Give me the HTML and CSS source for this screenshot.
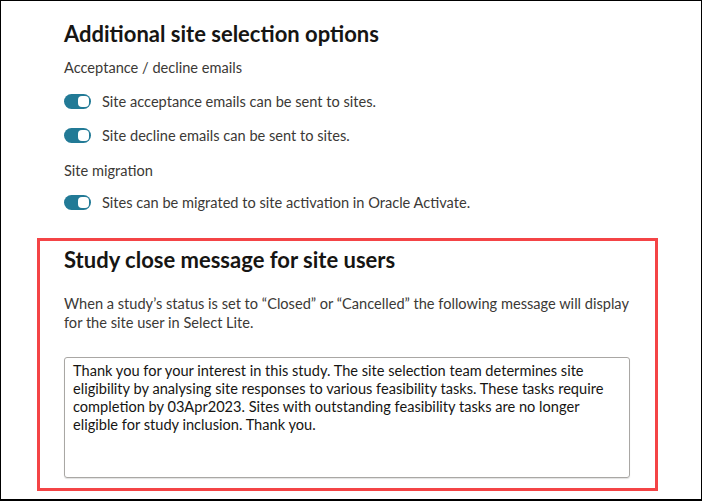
FILE: index.html
```html
<!DOCTYPE html>
<html>
<head>
<meta charset="utf-8">
<link rel="stylesheet" href="styles.css">
</head>
<body>
<div class="frame">
  <section class="options">
    <h2 class="title">Additional site selection options</h2>
    <div class="group-label">Acceptance / decline emails</div>
    <div class="switch-row"><span class="switch"><span class="knob"></span></span><span class="switch-text">Site acceptance emails can be sent to sites.</span></div>
    <div class="switch-row"><span class="switch"><span class="knob"></span></span><span class="switch-text">Site decline emails can be sent to sites.</span></div>
    <div class="group-label migration">Site migration</div>
    <div class="switch-row"><span class="switch"><span class="knob"></span></span><span class="switch-text">Sites can be migrated to site activation in Oracle Activate.</span></div>
  </section>
  <section class="highlight">
    <h2 class="title">Study close message for site users</h2>
    <p class="desc">When a study’s status is set to “Closed” or “Cancelled” the following message will display for the site user in Select Lite.</p>
    <div class="textbox">Thank you for your interest in this study. The site selection team determines site eligibility by analysing site responses to various feasibility tasks. These tasks require completion by 03Apr2023. Sites with outstanding feasibility tasks are no longer eligible for study inclusion. Thank you.</div>
  </section>
</div>
</body>
</html>
```

FILE: styles.css
```css
html, body {
  margin: 0;
  padding: 0;
  background: #fff;
}
.frame {
  box-sizing: border-box;
  width: 702px;
  height: 501px;
  border: 1px solid #000;
  border-bottom-width: 2px;
  font-family: Lato, "Noto Sans", sans-serif;
  color: #161513;
  overflow: hidden;
}
.options {
  padding: 20px 0 0 63px;
}
.title {
  margin: 0;
  font-size: 22px;
  font-weight: 700;
  line-height: 26px;
  color: #161513;
}
.group-label {
  margin-top: 12px;
  font-size: 14.6px;
  line-height: 18px;
  color: #3b3936;
}
.group-label.migration {
  margin-top: 17px;
}
.switch-row {
  display: flex;
  align-items: center;
  height: 20px;
  margin-top: 14px;
}
.group-label.migration + .switch-row {
  margin-top: 12px;
}
.switch {
  box-sizing: border-box;
  width: 27px;
  height: 15px;
  border-radius: 8px;
  background: #227a96;
  display: flex;
  align-items: center;
  justify-content: flex-end;
  padding-right: 2px;
}
.knob {
  width: 11px;
  height: 11px;
  border-radius: 4px;
  background: #fff;
}
.switch-text {
  margin-left: 11px;
  font-size: 14.6px;
  color: #3b3936;
}
.highlight {
  margin: 26px 0 0 36px;
  width: 621px;
  height: 253px;
  box-sizing: border-box;
  border: 3px solid #f44446;
  padding: 6px 25px 0 24px;
}
.desc {
  margin: 21px 0 0 0;
  font-size: 14.6px;
  line-height: 19px;
  color: #3b3936;
}
.textbox {
  margin-top: 25px;
  box-sizing: border-box;
  height: 121px;
  border: 1px solid #a9a7a4;
  border-radius: 3px;
  box-shadow: 0 1px 1px rgba(0,0,0,0.12);
  padding: 4px 8px;
  font-size: 14.6px;
  line-height: 18px;
  color: #161513;
}
```
